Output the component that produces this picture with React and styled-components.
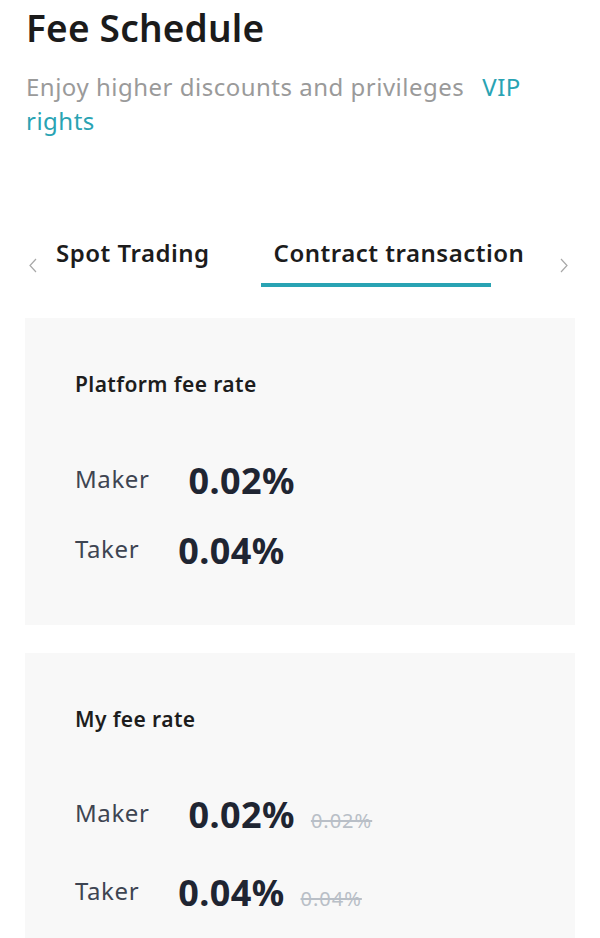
import React from "react";
import styled, { createGlobalStyle } from "styled-components";

const GlobalStyle = createGlobalStyle`
  body {
    margin: 0;
    background: #ffffff;
    font-family: "Noto Sans", "Open Sans", sans-serif;
  }
`;

const Page = styled.div`
  padding: 4px 25px 0 25px;
  height: 938px;
  overflow: hidden;
  box-sizing: border-box;
`;

const Title = styled.h1`
  margin: 0;
  font-size: 37px;
  line-height: 48px;
  font-weight: 600;
  letter-spacing: 0.2px;
  color: #1b1b1b;
  padding-left: 1px;
`;

const Subtitle = styled.p`
  margin: 18px 0 0 0;
  font-size: 24px;
  line-height: 34px;
  letter-spacing: 0.5px;
  color: #9a9a9a;
  padding-left: 1px;
`;

const Link = styled.a`
  color: #29a3b3;
  margin-left: 18px;
  text-decoration: none;
`;

const TabBar = styled.div`
  display: flex;
  align-items: flex-start;
  margin-top: 99px;
`;

const Chevron = styled.svg`
  width: 8px;
  height: 15px;
  margin-top: 21px;
  margin-left: ${(p) => (p.$right ? "auto" : "4px")};
  margin-right: ${(p) => (p.$right ? "7px" : "19px")};
  flex-shrink: 0;
`;

const Tab = styled.div`
  position: relative;
  font-size: 24px;
  line-height: 32px;
  font-weight: 600;
  letter-spacing: 0.5px;
  color: #1c1c1c;
  padding-bottom: 18px;
  white-space: nowrap;

  & + & {
    margin-left: 64px;
  }

  &::after {
    content: "";
    display: ${(p) => (p.$active ? "block" : "none")};
    position: absolute;
    left: -13px;
    bottom: 0;
    width: 230px;
    height: 4px;
    background: #29a3b3;
  }
`;

const Card = styled.section`
  background: #f8f8f8;
  margin-top: ${(p) => p.$top}px;
  padding: 52px 50px 56px 50px;
`;

const CardTitle = styled.h2`
  margin: 0 0 ${(p) => p.$gap}px 0;
  font-size: 21px;
  line-height: 28px;
  font-weight: 600;
  letter-spacing: 0.4px;
  color: #1d1d1d;
`;

const Rows = styled.div`
  display: flex;
  flex-direction: column;
  gap: ${(p) => p.$gap}px;
`;

const Row = styled.div`
  display: flex;
  align-items: flex-end;
`;

const Label = styled.span`
  font-size: 24px;
  line-height: 1;
  letter-spacing: 0.6px;
  color: #3e4552;
  padding-bottom: 8px;
  margin-right: 39px;
`;

const Value = styled.span`
  font-size: 36px;
  line-height: 1;
  font-weight: 700;
  letter-spacing: 0.4px;
  color: #1f2532;
`;

const OldValue = styled.span`
  font-size: 20px;
  line-height: 1;
  letter-spacing: 1px;
  color: #b9bfc7;
  text-decoration: line-through;
  margin-left: 16px;
  padding-bottom: 2px;
`;

function FeeCard({ title, rows, top, titleGap, rowGap }) {
  return (
    <Card $top={top}>
      <CardTitle $gap={titleGap}>{title}</CardTitle>
      <Rows $gap={rowGap}>
        {rows.map((r) => (
          <Row key={r.label}>
            <Label>{r.label}</Label>
            <Value>{r.value}</Value>
            {r.old && <OldValue>{r.old}</OldValue>}
          </Row>
        ))}
      </Rows>
    </Card>
  );
}

export default function App() {
  return (
    <>
      <GlobalStyle />
      <Page>
        <Title>Fee Schedule</Title>
        <Subtitle>
          Enjoy higher discounts and privileges
          <Link href="#">VIP rights</Link>
        </Subtitle>

        <TabBar>
          <Chevron viewBox="0 0 8 15">
            <path d="M7 1 L1 7.5 L7 14" fill="none" stroke="#a8a8a8" strokeWidth="1.2" />
          </Chevron>
          <Tab>Spot Trading</Tab>
          <Tab $active>Contract transaction</Tab>
          <Chevron viewBox="0 0 8 15" $right>
            <path d="M1 1 L7 7.5 L1 14" fill="none" stroke="#a8a8a8" strokeWidth="1.2" />
          </Chevron>
        </TabBar>

        <FeeCard
          top={31}
          title="Platform fee rate"
          titleGap={65}
          rowGap={34}
          rows={[
            { label: "Maker", value: "0.02%" },
            { label: "Taker", value: "0.04%" },
          ]}
        />
        <FeeCard
          top={28}
          title="My fee rate"
          titleGap={64}
          rowGap={42}
          rows={[
            { label: "Maker", value: "0.02%", old: "0.02%" },
            { label: "Taker", value: "0.04%", old: "0.04%" },
          ]}
        />
      </Page>
    </>
  );
}
